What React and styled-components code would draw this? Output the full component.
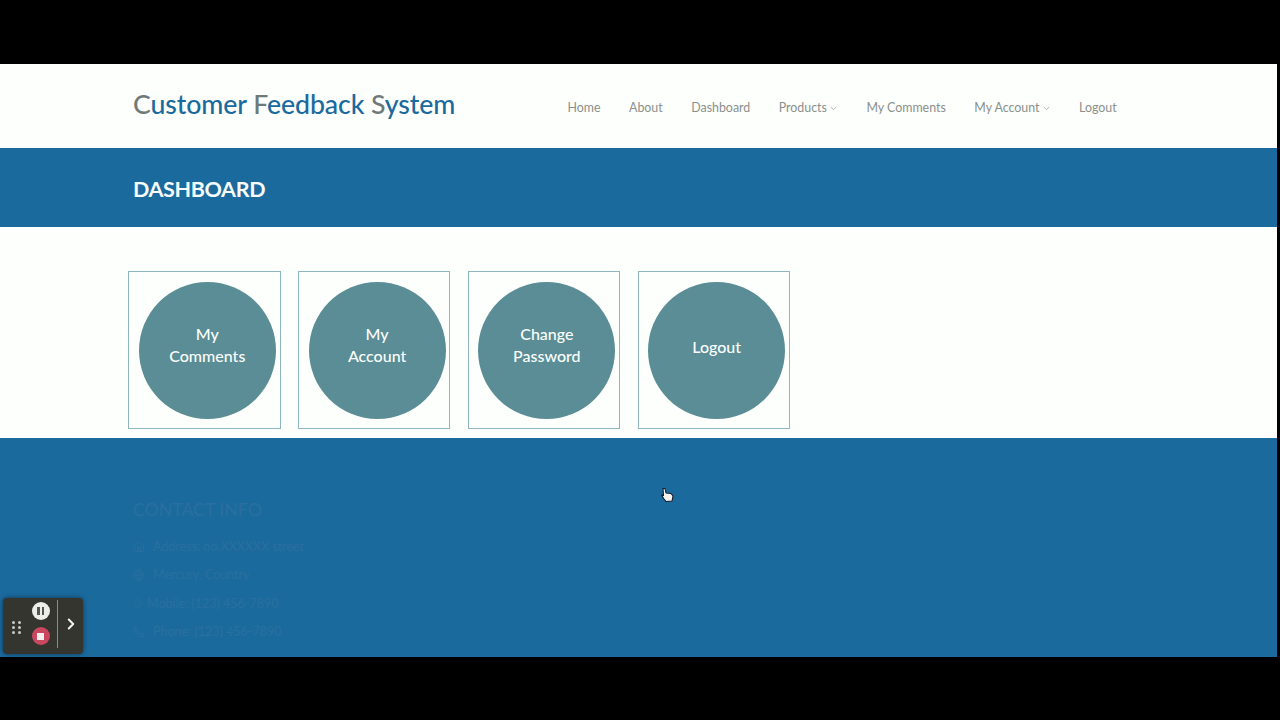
import React from "react";
import styled, { createGlobalStyle } from "styled-components";
import { ChevronDown, House, Globe, Smartphone, Phone, ChevronRight } from "lucide-react";

const Global = createGlobalStyle`
  html, body { margin: 0; padding: 0; background: #000; }
  body { font-family: Lato, "Open Sans", sans-serif; overflow: hidden; }
`;

const Screen = styled.div`
  width: 1280px; height: 720px; background: #000; padding-top: 64px; box-sizing: border-box; position: relative; overflow: hidden;
`;
const Page = styled.div`
  width: 1277px; height: 593px; background: #fdfffc; display: flex; flex-direction: column; overflow: hidden;
`;
const Header = styled.header`
  height: 84px; flex: none; display: flex; align-items: flex-start; box-sizing: border-box; padding-left: 133px;
`;
const Brand = styled.div`
  margin-top: 23px; width: 420px; flex: none; font-size: 26.7px; line-height: 34px; font-weight: 500; color: #1b6a9e;
  letter-spacing: -0.1px; white-space: nowrap;
`;
const BrandInitial = styled.span` color: #6f7a78; `;
const Nav = styled.nav`
  margin-top: 35px; margin-left: 14.5px; display: flex; gap: 28.5px; font-size: 12.4px; line-height: 18px; color: #8a8f8d;
`;
const NavItem = styled.span` display: flex; align-items: center; gap: 2px; white-space: nowrap; `;
const Banner = styled.div`
  height: 79px; flex: none; background: #1b6a9e; box-sizing: border-box; padding: 27px 0 0 133px;
  color: #f8fcfd; font-size: 21.5px; line-height: 28px; font-weight: 700;
  letter-spacing: -0.35px;
`;
const Content = styled.main`
  height: 211px; flex: none; box-sizing: border-box; padding: 44px 0 0 128.3px; display: flex; gap: 17.4px; align-items: flex-start;
`;
const Card = styled.div`
  width: 152.4px; height: 158px; box-sizing: border-box; border: 1px solid #8fb6bd; padding: 10px 0 0 9.5px; flex: none;
`;
const Circle = styled.div`
  width: 137px; height: 137px; border-radius: 50%; background: #5a8d96; color: #fbfefd;
  display: flex; justify-content: center; text-align: center; box-sizing: border-box;
  align-items: flex-start; padding-top: ${p => p.$single ? 54 : 41}px;
  font-size: 16px; line-height: 22px; font-weight: 500;
`;
const Footer = styled.footer`
  flex: 1; background: #1b6a9e; box-sizing: border-box; padding: 61px 0 0 133px;
`;
const FooterTitle = styled.div` font-size: 17.7px; line-height: 22px; color: #2a6f9f; margin-bottom: 12px; `;
const FooterRow = styled.div`
  display: flex; align-items: center; gap: ${p => p.$narrow ? 5 : 8}px; font-size: 12.5px; line-height: 28px; height: 28.3px; color: #2a6f9f; white-space: nowrap;
`;
const Recorder = styled.div`
  position: absolute; left: 3px; top: 598px; width: 80px; height: 56px; background: #35352f; border-radius: 4px;
  box-shadow: 0 0 5px rgba(0,0,0,.5); display: flex; align-items: flex-start; box-sizing: border-box;
`;
const Grip = styled.div`
  width: 9px; margin: 23px 0 0 9px; display: grid; grid-template-columns: 3px 3px; gap: 2px 3px; flex: none;
`;
const Dot = styled.i` width: 3px; height: 3px; background: #c9cbc6; border-radius: 50%; display: block; `;
const Buttons = styled.div` margin: 4px 0 0 10.5px; display: flex; flex-direction: column; gap: 7px; flex: none; `;
const RoundButton = styled.div`
  width: 18px; height: 18px; border-radius: 50%; background: ${p => p.$bg}; display: flex; align-items: center; justify-content: center; gap: 2px;
`;
const StopSquare = styled.i` width: 7px; height: 7px; background: #f6efef; display: block; `;
const PauseBar = styled.i` width: 2.5px; height: 8px; background: #55564f; display: block; `;
const Divider = styled.div` width: 1px; height: 48px; margin: 2px 0 0 7.5px; background: #8c8c88; flex: none; `;
const Arrow = styled.div` margin: 17px 0 0 4px; display: flex; color: #f4f4f2; `;
const Cursor = styled.svg` position: absolute; left: 660px; top: 487px; `;

const nav = [["Home"],["About"],["Dashboard"],["Products",1],["My Comments"],["My Account",1],["Logout"]];
const cards = [["My","Comments"],["My","Account"],["Change","Password"],["Logout"]];
const rows = [
  [House,"Address: no.XXXXXX street",12],
  [Globe,"Mercury, Country",12],
  [Smartphone,"Mobile: (123) 456-7890",9,true],
  [Phone,"Phone: (123) 456-7890",12],
];

export default function App() {
  return (
    <Screen>
      <Global />
      <Page>
        <Header>
          <Brand><BrandInitial>C</BrandInitial>ustomer <BrandInitial>F</BrandInitial>eedback <BrandInitial>S</BrandInitial>ystem</Brand>
          <Nav>
            {nav.map(([t, c]) => (
              <NavItem key={t}>{t}{c && <ChevronDown size={9} strokeWidth={1.8} />}</NavItem>
            ))}
          </Nav>
        </Header>
        <Banner>DASHBOARD</Banner>
        <Content>
          {cards.map(lines => (
            <Card key={lines.join()}>
              <Circle $single={lines.length === 1}>
                <div>{lines.map(l => <div key={l}>{l}</div>)}</div>
              </Circle>
            </Card>
          ))}
        </Content>
        <Footer>
          <FooterTitle>CONTACT INFO</FooterTitle>
          {rows.map(([I, t, s, n]) => (
            <FooterRow key={t} $narrow={n}><I size={s} />{t}</FooterRow>
          ))}
        </Footer>
      </Page>
      <Recorder>
        <Grip>{[0,1,2,3,4,5].map(i => <Dot key={i} />)}</Grip>
        <Buttons>
          <RoundButton $bg="#ecefe9"><PauseBar /><PauseBar /></RoundButton>
          <RoundButton $bg="#c9485f"><StopSquare /></RoundButton>
        </Buttons>
        <Divider />
        <Arrow><ChevronRight size={18} strokeWidth={2.6} /></Arrow>
      </Recorder>
      <Cursor width="14" height="16" viewBox="0 0 14 16">
        <path d="M3 1.5 L5 1.5 L6 6 L11 6.5 L13 9 L12 14 L6 14.5 L4 12 L1.5 8 L3.5 8.5 Z" fill="#f5f3ef" stroke="#1a1a22" strokeWidth="1.1" strokeLinejoin="round" />
      </Cursor>
    </Screen>
  );
}
